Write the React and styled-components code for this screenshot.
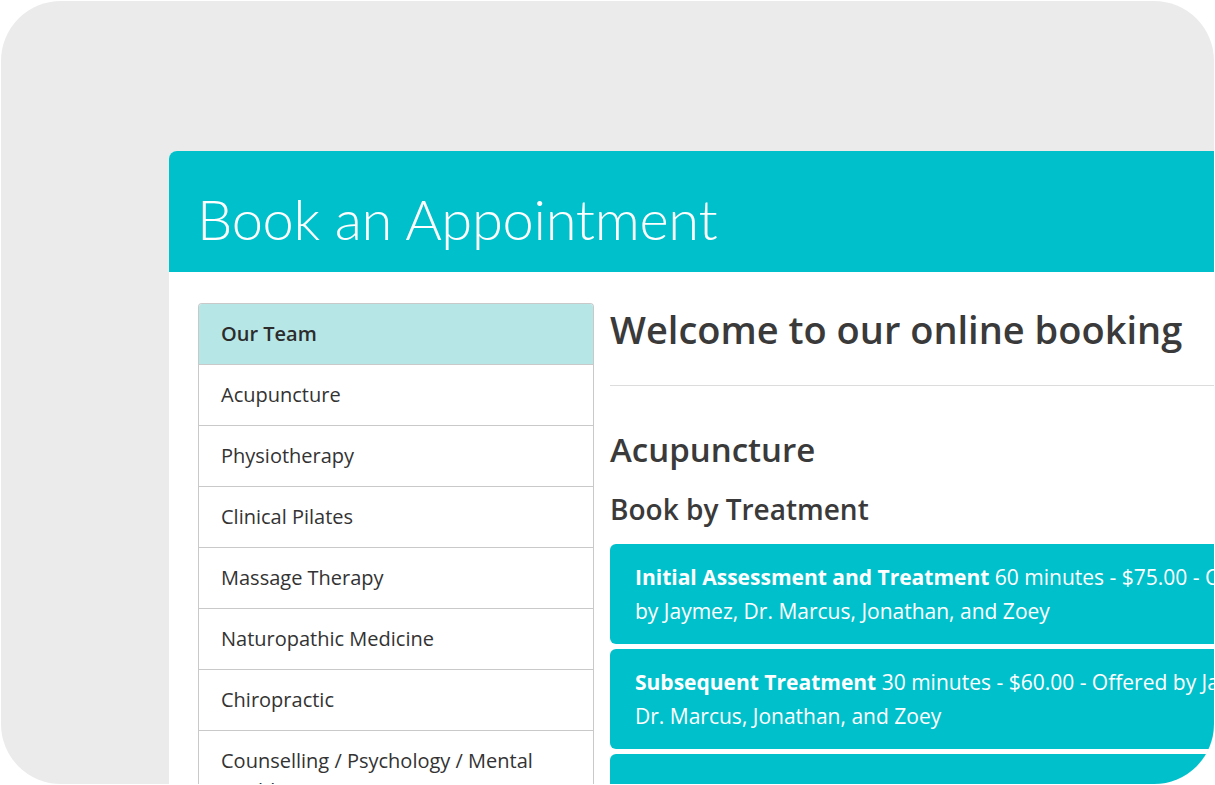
import styled, { createGlobalStyle } from "styled-components";

const GlobalStyle = createGlobalStyle`
  html, body {
    margin: 0;
    padding: 0;
    background: #ffffff;
  }
  body {
    font-family: "Open Sans", "Noto Sans", sans-serif;
    color: #3a3a3a;
  }
`;

const Frame = styled.div`
  margin: 1px;
  width: 1213px;
  height: 783px;
  box-sizing: border-box;
  padding: 150px 0 0 168px;
  border-radius: 60px;
  background: #ebebeb;
  overflow: hidden;
`;

const Panel = styled.div`
  width: 1120px;
  background: #ffffff;
  border-radius: 8px 8px 0 0;
  overflow: hidden;
`;

const Header = styled.header`
  height: 121px;
  box-sizing: border-box;
  padding: 37px 0 0 28px;
  background: #00c1cb;
`;

const Title = styled.h1`
  margin: 0;
  font-family: "Lato", sans-serif;
  font-size: 56px;
  line-height: 62px;
  font-weight: 300;
  color: #ffffff;
  letter-spacing: -0.3px;
`;

const Body = styled.div`
  display: flex;
  align-items: flex-start;
  gap: 16px;
  padding: 31px 29px 0;
`;

const Sidebar = styled.nav`
  flex: 0 0 396px;
  box-sizing: border-box;
  border: 1px solid #c9c9c9;
  border-bottom: none;
  border-radius: 4px 4px 0 0;
  overflow: hidden;
`;

const NavItem = styled.div`
  padding: 15px 22px;
  font-size: 20px;
  line-height: 30px;
  font-weight: ${(p) => (p.$active ? 600 : 400)};
  color: ${(p) => (p.$active ? "#2c2c2c" : "#333333")};
  background: ${(p) => (p.$active ? "#b6e6e6" : "#ffffff")};
  border-bottom: 1px solid #c9c9c9;
`;

const Main = styled.main`
  flex: 1;
  min-width: 0;
`;

const Welcome = styled.h2`
  margin: 3px 0 0;
  font-size: 38px;
  line-height: 46px;
  font-weight: 600;
  color: #3a3a3a;
`;

const Rule = styled.hr`
  margin: 33px 0 0;
  border: none;
  border-top: 1px solid #dcdcdc;
`;

const Section = styled.h3`
  margin: 44px 0 0;
  font-size: 33px;
  line-height: 40px;
  font-weight: 600;
  color: #3a3a3a;
`;

const Subtitle = styled.h4`
  margin: 22px 0 0;
  font-size: 28px;
  line-height: 34px;
  font-weight: 600;
  color: #3a3a3a;
`;

const Cards = styled.div`
  display: flex;
  flex-direction: column;
  gap: 5px;
  margin-top: 18px;
`;

const Card = styled.div`
  width: 700px;
  height: 100px;
  box-sizing: border-box;
  padding: 16px 25px;
  border-radius: 6px;
  background: #00c1cb;
  color: #ffffff;
  font-size: 21px;
  line-height: 34px;
`;

const CardName = styled.strong`
  font-weight: 700;
`;

const navItems = [
  "Our Team",
  "Acupuncture",
  "Physiotherapy",
  "Clinical Pilates",
  "Massage Therapy",
  "Naturopathic Medicine",
  "Chiropractic",
  "Counselling / Psychology / Mental Health",
];

const treatments = [
  {
    name: "Initial Assessment and Treatment",
    info: "60 minutes - $75.00 - Offered by Jaymez, Dr. Marcus, Jonathan, and Zoey",
  },
  {
    name: "Subsequent Treatment",
    info: "30 minutes - $60.00 - Offered by Jaymez, Dr. Marcus, Jonathan, and Zoey",
  },
  { name: "", info: "" },
];

const App = () => {
  return (
    <>
      <GlobalStyle />
      <Frame>
        <Panel>
          <Header>
            <Title>Book an Appointment</Title>
          </Header>
          <Body>
            <Sidebar>
              {navItems.map((item, i) => (
                <NavItem key={item} $active={i === 0}>
                  {item}
                </NavItem>
              ))}
            </Sidebar>
            <Main>
              <Welcome>Welcome to our online booking</Welcome>
              <Rule />
              <Section>Acupuncture</Section>
              <Subtitle>Book by Treatment</Subtitle>
              <Cards>
                {treatments.map((t, i) => (
                  <Card key={i}>
                    {t.name && <CardName>{t.name}</CardName>} {t.info}
                  </Card>
                ))}
              </Cards>
            </Main>
          </Body>
        </Panel>
      </Frame>
    </>
  );
};

export default App;
